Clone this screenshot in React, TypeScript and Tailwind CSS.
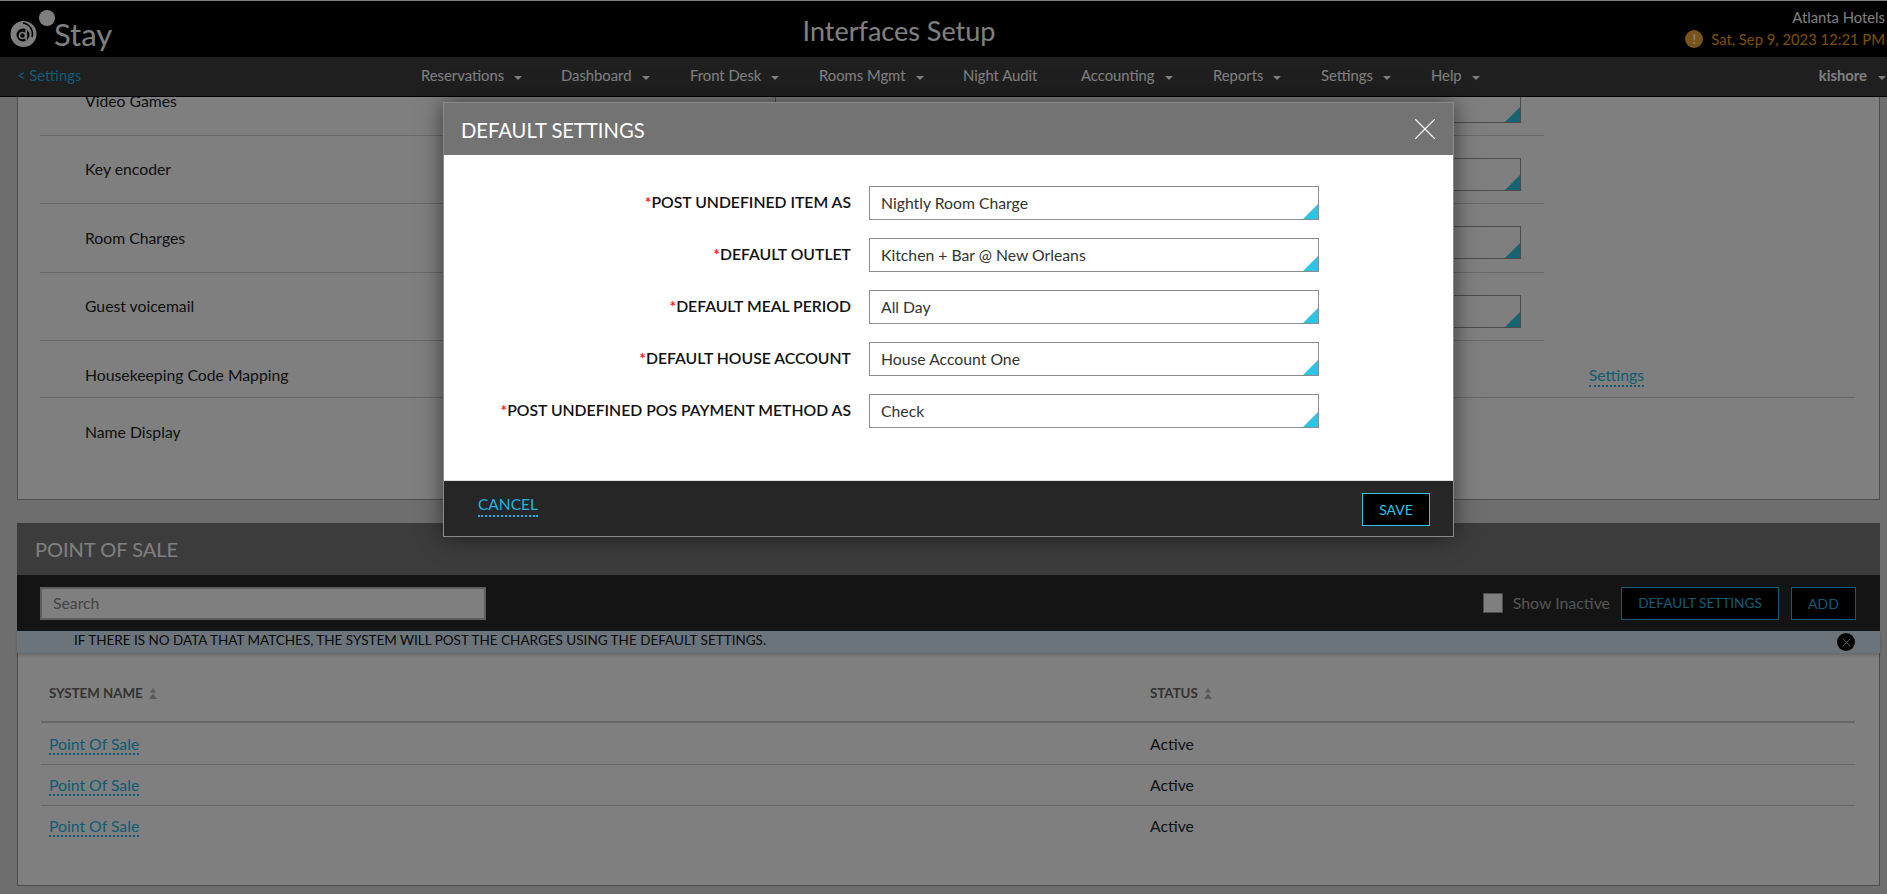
import { X } from "lucide-react";

const menu = [
  { name: "Reservations", caret: true, w: "w-[140px]" },
  { name: "Dashboard", caret: true, w: "w-[129px]" },
  { name: "Front Desk", caret: true, w: "w-[129px]" },
  { name: "Rooms Mgmt", caret: true, w: "w-[144px]" },
  { name: "Night Audit", caret: false, w: "w-[118px]" },
  { name: "Accounting", caret: true, w: "w-[132px]" },
  { name: "Reports", caret: true, w: "w-[108px]" },
  { name: "Settings", caret: true, w: "w-[110px]" },
  { name: "Help", caret: true, w: "w-[70px]" },
];

const interfaceRows = [
  { name: "Video Games", h: "h-[68px]", label: "-mt-px" },
  { name: "Key encoder", h: "h-[68px]", label: "-mt-px" },
  { name: "Room Charges", h: "h-[69px]", label: "" },
  { name: "Guest voicemail", h: "h-[68px]", label: "-mt-px" },
];

const modalFields = [
  { label: "POST UNDEFINED ITEM AS", value: "Nightly Room Charge" },
  { label: "DEFAULT OUTLET", value: "Kitchen + Bar @ New Orleans" },
  { label: "DEFAULT MEAL PERIOD", value: "All Day" },
  { label: "DEFAULT HOUSE ACCOUNT", value: "House Account One" },
  { label: "POST UNDEFINED POS PAYMENT METHOD AS", value: "Check" },
];

function Caret({ className }: { className?: string }) {
  return (
    <svg width="8" height="4" viewBox="0 0 8 4" className={className}>
      <path d="M0 0h8L4 4z" fill="currentColor" />
    </svg>
  );
}

function SortIcon() {
  return (
    <svg width="8" height="11" viewBox="0 0 8 11" className="ml-[6px] text-[#b4b4b4]">
      <path d="M4 0l3 4.5H1zM4 5.5L8 11H0z" fill="currentColor" />
    </svg>
  );
}

function Logo() {
  return (
    <svg width="48" height="40" viewBox="0 0 48 40" className="shrink-0">
      <circle cx="13.5" cy="24" r="13" fill="#fff" />
      <path d="M13 13a11 11 0 0 1 9 14" stroke="#000" strokeWidth="1.6" fill="none" />
      <circle cx="37" cy="8" r="8" fill="#fff" />
      <circle cx="13" cy="25" r="6.5" fill="#000" />
      <circle cx="12.5" cy="25.5" r="3" fill="none" stroke="#fff" strokeWidth="1.6" />
      <path d="M16.2 19.5v11" stroke="#fff" strokeWidth="1.8" />
    </svg>
  );
}

function DropField() {
  return (
    <div className="relative h-[33px] w-[746px] shrink-0 border border-[#999] bg-white">
      <div className="absolute right-0 bottom-0 h-[15px] w-[15px] bg-[#2ec4e6] [clip-path:polygon(100%_0,100%_100%,0_100%)]" />
    </div>
  );
}

function PosRow({ h, line }: { h: string; line?: boolean }) {
  return (
    <div className={"flex items-center pl-[8px] " + h + (line ? " border-b border-[#ccc]" : "")}>
      <span className="w-[1101px]">
        <a className="border-b-2 border-dotted border-[#22b8e8] text-[#22b8e8]">Point Of Sale</a>
      </span>
      <span>Active</span>
    </div>
  );
}

export default function App() {
  return (
    <div className="relative h-[894px] w-full overflow-hidden bg-[#dcdcdc] text-[#222] [font-family:Lato,sans-serif]">
      <div className="flex h-full flex-col">
        <header className="relative flex h-[57px] shrink-0 items-start justify-between border-t border-white bg-black">
          <div className="flex items-start pt-[9px] pl-[10px]">
            <Logo />
            <span className="mt-[5px] -ml-[4px] text-[31px] leading-[38px] text-white">Stay</span>
          </div>
          <div className="absolute top-[12px] left-0 w-[1798px] text-center text-[27px] leading-[36px] text-white">
            Interfaces Setup
          </div>
          <div className="flex flex-col items-end pt-[5px] pr-[2px] text-[14.8px] leading-[22px]">
            <span className="text-white">Atlanta Hotels</span>
            <span className="flex items-center text-[#f5a000]">
              <span className="mr-[8px] flex h-[18px] w-[18px] items-center justify-center rounded-full bg-[#f0a830] text-[13px] font-bold text-white">
                !
              </span>
              Sat, Sep 9, 2023 12:21 PM
            </span>
          </div>
        </header>

        <nav className="flex h-[40px] shrink-0 items-center border-b border-black bg-[#3e3e3e] pb-[2px] text-[14.8px] text-white">
          <a className="ml-[17px] w-[404px] text-[#22b8e8]">&lt; Settings</a>
          {menu.map((item) => (
            <span key={item.name} className={"flex items-center " + item.w}>
              {item.name}
              {item.caret && <Caret className="mt-[5px] ml-[10px]" />}
            </span>
          ))}
          <span className="ml-auto flex items-center pr-[1px] font-bold">
            kishore
            <Caret className="mt-[5px] ml-[11px]" />
          </span>
        </nav>

        <main className="min-h-0 flex-1 overflow-hidden pr-[7px] pl-[17px]">
          <section className="-mt-[30px] h-[433px] border border-[#999] bg-white">
            <div className="ml-[22px] text-[15.75px]">
              {interfaceRows.map((row) => (
                <div
                  key={row.name}
                  className={"flex w-[1504px] border-b border-[#ccc] pt-[22px] pl-[45px] " + row.h}
                >
                  <span className={"w-[690px] leading-6 " + row.label}>{row.name}</span>
                  <DropField />
                </div>
              ))}
              <div className="flex h-[57px] w-[1815px] justify-between border-b border-[#ccc] pt-[22px] pl-[45px]">
                <span className="leading-6">Housekeeping Code Mapping</span>
                <a className="mr-[211px] h-[24px] border-b-2 border-dotted border-[#22b8e8] leading-6 text-[#22b8e8]">
                  Settings
                </a>
              </div>
              <div className="pt-[22px] pl-[45px] leading-6">Name Display</div>
            </div>
          </section>

          <section className="mt-[23px] h-[363px] border border-[#999] border-t-0 bg-white">
            <div className="-mx-px flex h-[52px] items-center bg-[#787878] pl-[18px] text-[20px] text-white">
              POINT OF SALE
            </div>
            <div className="-mx-px flex h-[56px] items-center justify-between bg-[#282828] pr-[24px] pl-[23px]">
              <div className="flex h-[33px] w-[446px] items-center border-2 border-[#bbb] bg-white pl-[11px] text-[15.75px] text-[#888]">
                Search
              </div>
              <div className="flex items-center">
                <span className="h-[20px] w-[20px] border border-[#999] bg-white" />
                <span className="ml-[10px] text-[15.9px] text-[#aaa]">Show Inactive</span>
                <button className="ml-[11px] h-[33px] w-[158px] border border-[#22b8e8] bg-black text-[13.6px] text-[#22b8e8]">
                  DEFAULT SETTINGS
                </button>
                <button className="ml-[12px] h-[33px] w-[65px] border border-[#22b8e8] bg-black text-[14px] text-[#22b8e8]">
                  ADD
                </button>
              </div>
            </div>
            <div className="relative -mx-px flex h-[22px] items-center bg-[#d7e8f6] pb-[3px] pl-[57px] text-[13.5px] text-[#111] shadow-[0_2px_3px_rgba(0,0,0,0.2)]">
              IF THERE IS NO DATA THAT MATCHES, THE SYSTEM WILL POST THE CHARGES USING THE DEFAULT SETTINGS.
              <span className="absolute top-[2px] right-[25px] flex h-[18px] w-[18px] items-center justify-center rounded-full bg-black text-white">
                <X size={15} strokeWidth={1.1} />
              </span>
            </div>
            <div className="mr-[24px] ml-[23px]">
              <div className="flex h-[70px] items-center border-b-2 border-[#ccc] pt-[13px] pl-[8px] text-[13.3px] font-bold text-[#666]">
                <span className="flex w-[1101px] items-center">
                  SYSTEM NAME
                  <SortIcon />
                </span>
                <span className="flex items-center">
                  STATUS
                  <SortIcon />
                </span>
              </div>
              <div className="text-[15.75px]">
                <PosRow h="h-[42px]" line />
                <PosRow h="h-[41px]" line />
                <PosRow h="h-[40px]" />
              </div>
            </div>
          </section>
        </main>
      </div>

      {/* backdrop + dialog */}
      <div className="absolute inset-0 bg-black/50" />
      <div className="absolute top-[102px] left-[443px] w-[1011px] border border-[#8a8a8a] shadow-[0_0_22px_rgba(0,0,0,0.55)]">
        <div className="flex h-[52px] items-center justify-between bg-[#737373] pr-[9px] pl-[17px] text-[20.2px] text-white">
          <span className="mt-[2px]">DEFAULT SETTINGS</span>
          <X size={38} strokeWidth={0.7} />
        </div>
        <div className="flex h-[326px] flex-col gap-[18px] border-b border-[#ddd] bg-white pt-[31px]">
          {modalFields.map((f) => (
            <div key={f.label} className="flex h-[34px] items-center">
              <div className="-mt-[3px] w-[407px] text-right text-[15.75px] leading-[28px] font-semibold text-[#111]">
                <span className="text-[#f00]">*</span>
                {f.label}
              </div>
              <div className="relative ml-[18px] flex h-[34px] w-[450px] items-center border border-[#8c8c8c] pl-[11px] text-[15.75px] text-[#333]">
                <span>{f.value}</span>
                <div className="absolute right-0 bottom-0 h-[15px] w-[15px] bg-[#2ec4e6] [clip-path:polygon(100%_0,100%_100%,0_100%)]" />
              </div>
            </div>
          ))}
        </div>
        <div className="flex h-[55px] items-center justify-between bg-[#262626] pt-[2px] pr-[23px] pl-[34px]">
          <a className="-mt-[9px] border-b-2 border-dotted border-[#1fb5e0] text-[15.5px] leading-[22px] text-[#1fb5e0]">
            CANCEL
          </a>
          <button className="h-[33px] w-[68px] border border-[#2ec4e6] bg-black text-[14px] text-[#2ec4e6]">
            SAVE
          </button>
        </div>
      </div>
    </div>
  );
}
